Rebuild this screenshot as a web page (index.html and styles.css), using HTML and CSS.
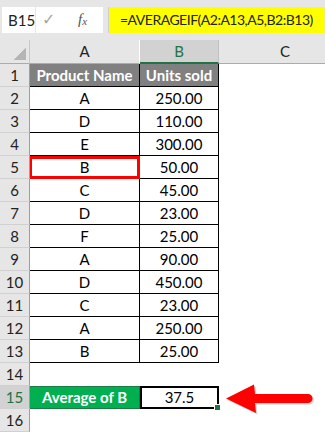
FILE: index.html
```html
<!DOCTYPE html>
<html lang="en">

<head>
    <meta charset="UTF-8">
    <meta name="viewport" content="width=device-width, initial-scale=1.0">
    <title>AVERAGEIF</title>
    <link rel="stylesheet" href="styles.css">
</head>

<body>
    <!-- formula bar -->
    <div class="topbar">
        <div class="namebox">B15</div>
        <div class="tools">
            <span class="check">✓</span>
            <span class="fx">f<sub>x</sub></span>
        </div>
        <div class="formula">=AVERAGEIF(A2:A13,A5,B2:B13)</div>
    </div>

    <!-- sheet -->
    <div class="sheet">
        <div class="corner"></div>
        <div class="colhd">A</div>
        <div class="colhd sel">B</div>
        <div class="colhd last">C</div>

        <div class="rh">1</div>
        <div class="cell tb th">Product Name</div>
        <div class="cell tb th">Units sold</div>
        <div class="cell"></div>

        <div class="rh">2</div>
        <div class="cell tb">A</div>
        <div class="cell tb">250.00</div>
        <div class="cell"></div>

        <div class="rh">3</div>
        <div class="cell tb">D</div>
        <div class="cell tb">110.00</div>
        <div class="cell"></div>

        <div class="rh">4</div>
        <div class="cell tb">E</div>
        <div class="cell tb">300.00</div>
        <div class="cell"></div>

        <div class="rh">5</div>
        <div class="cell tb mark">B</div>
        <div class="cell tb">50.00</div>
        <div class="cell"></div>

        <div class="rh">6</div>
        <div class="cell tb">C</div>
        <div class="cell tb">45.00</div>
        <div class="cell"></div>

        <div class="rh">7</div>
        <div class="cell tb">D</div>
        <div class="cell tb">23.00</div>
        <div class="cell"></div>

        <div class="rh">8</div>
        <div class="cell tb">F</div>
        <div class="cell tb">25.00</div>
        <div class="cell"></div>

        <div class="rh">9</div>
        <div class="cell tb">A</div>
        <div class="cell tb">90.00</div>
        <div class="cell"></div>

        <div class="rh">10</div>
        <div class="cell tb">D</div>
        <div class="cell tb">450.00</div>
        <div class="cell"></div>

        <div class="rh">11</div>
        <div class="cell tb">C</div>
        <div class="cell tb">23.00</div>
        <div class="cell"></div>

        <div class="rh">12</div>
        <div class="cell tb">A</div>
        <div class="cell tb">250.00</div>
        <div class="cell"></div>

        <div class="rh">13</div>
        <div class="cell tb">B</div>
        <div class="cell tb">25.00</div>
        <div class="cell"></div>

        <div class="rh">14</div>
        <div class="cell"></div>
        <div class="cell"></div>
        <div class="cell"></div>

        <div class="rh sel">15</div>
        <div class="cell avg">Average of B</div>
        <div class="cell active">37.5<span class="handle"></span></div>
        <div class="cell arrowcell">
            <svg class="arrow" width="96" height="36" viewBox="0 0 96 36">
                <path d="M4 18.5 L32 4.5 L33 14 L86 14 A4.5 4.5 0 0 1 86 23 L33 23 L34 33 Z" fill="#7f7f7f" opacity="0.35" transform="translate(1.5,1.5)" />
                <path d="M4 18.5 L32 4.5 L33 14 L86 14 A4.5 4.5 0 0 1 86 23 L33 23 L34 33 Z" fill="#ff0000" />
            </svg>
        </div>

        <div class="rh">16</div>
        <div class="cell"></div>
        <div class="cell"></div>
        <div class="cell"></div>
    </div>
</body>

</html>
```

FILE: styles.css
```css
/*
    基本样式
*/
html,
body {
    margin: 0;
    padding: 0;
    overflow: hidden;
    background-color: #fff;
}

body {
    font-family: Lato, "Open Sans", sans-serif;
    font-size: 15px;
    color: #000;
}

/*
    编辑栏
*/
.topbar {
    display: flex;
    align-items: center;
    height: 40px;
    padding: 0 0 1px 2px;
    box-sizing: border-box;
    background-color: #e6e6e6;
}

.namebox {
    flex-shrink: 0;
    width: 33px;
    height: 26px;
    line-height: 26px;
    padding-left: 6px;
    box-sizing: border-box;
    background-color: #fff;
    color: #222;
}

.tools {
    flex-shrink: 0;
    display: flex;
    align-items: center;
    width: 67px;
    height: 26px;
    margin-left: 1px;
    background-color: #fff;
}

.tools .check {
    width: 16px;
    margin-left: 6px;
    font-family: "DejaVu Sans", sans-serif;
    font-size: 16px;
    line-height: 26px;
    color: #a6a6a6;
}

.tools .fx {
    margin-left: 20px;
    font-family: "Liberation Serif", serif;
    font-style: italic;
    font-size: 15px;
    color: #555;
}

.tools .fx sub {
    font-size: 11px;
    vertical-align: -1px;
}

.formula {
    flex: 1;
    min-width: 0;
    height: 26px;
    line-height: 26px;
    margin-left: 5px;
    padding-left: 11px;
    background-color: #ffff00;
    border-left: 1px solid #cfcfcf;
    font-size: 14px;
    letter-spacing: -0.5px;
    color: #222;
    white-space: nowrap;
    overflow: hidden;
}

/*
    表格
*/
.sheet {
    display: grid;
    grid-template-columns: 30px 110px 79px 1fr;
    grid-template-rows: 24px;
    grid-auto-rows: 23px;
}

.corner {
    background-color: #e6e6e6;
    background-image: linear-gradient(135deg, transparent 50%, #b5b5b5 50%);
    background-size: 13px 13px;
    background-position: right 3px bottom 3px;
    background-repeat: no-repeat;
    border-right: 1px solid #c8c8c8;
    border-bottom: 1px solid #ababab;
}

.colhd {
    text-align: center;
    line-height: 23px;
    background-color: #e6e6e6;
    border-right: 1px solid #fff;
    border-bottom: 1px solid #ababab;
    color: #222;
}

.colhd.last {
    padding-left: 26px;
    border-right: none;
}

.colhd.sel {
    background-color: #d2d2d2;
    color: #217346;
    border-right-color: #c0c0c0;
    border-bottom: 2px solid #217346;
    line-height: 22px;
}

.rh {
    text-align: center;
    line-height: 22px;
    background-color: #e6e6e6;
    border-right: 1px solid #9e9e9e;
    border-bottom: 1px solid #d0d0d0;
    color: #222;
}

.rh.sel {
    background-color: #d2d2d2;
    color: #217346;
}

.cell {
    box-sizing: border-box;
    text-align: center;
    line-height: 22px;
    white-space: nowrap;
}

.cell.tb {
    border-right: 1px solid #000;
    border-bottom: 1px solid #000;
}

.cell.th {
    background-color: #808080;
    color: #fff;
    font-weight: bold;
}

.cell.mark {
    border: 3px solid #ff0000;
    border-left-width: 2px;
    line-height: 17px;
}

.cell.avg {
    background-color: #00b050;
    border: 1px solid #1d7a45;
    border-left: none;
    color: #fff;
    font-weight: bold;
    line-height: 21px;
}

.cell.active {
    position: relative;
    border: 2px solid #000;
    line-height: 19px;
}

.cell.active .handle {
    position: absolute;
    right: -4px;
    bottom: -4px;
    width: 5px;
    height: 5px;
    background-color: #217346;
    border: 1px solid #fff;
}

.arrowcell {
    position: relative;
}

.arrow {
    position: absolute;
    left: 3px;
    top: -6px;
    overflow: visible;
}
```
